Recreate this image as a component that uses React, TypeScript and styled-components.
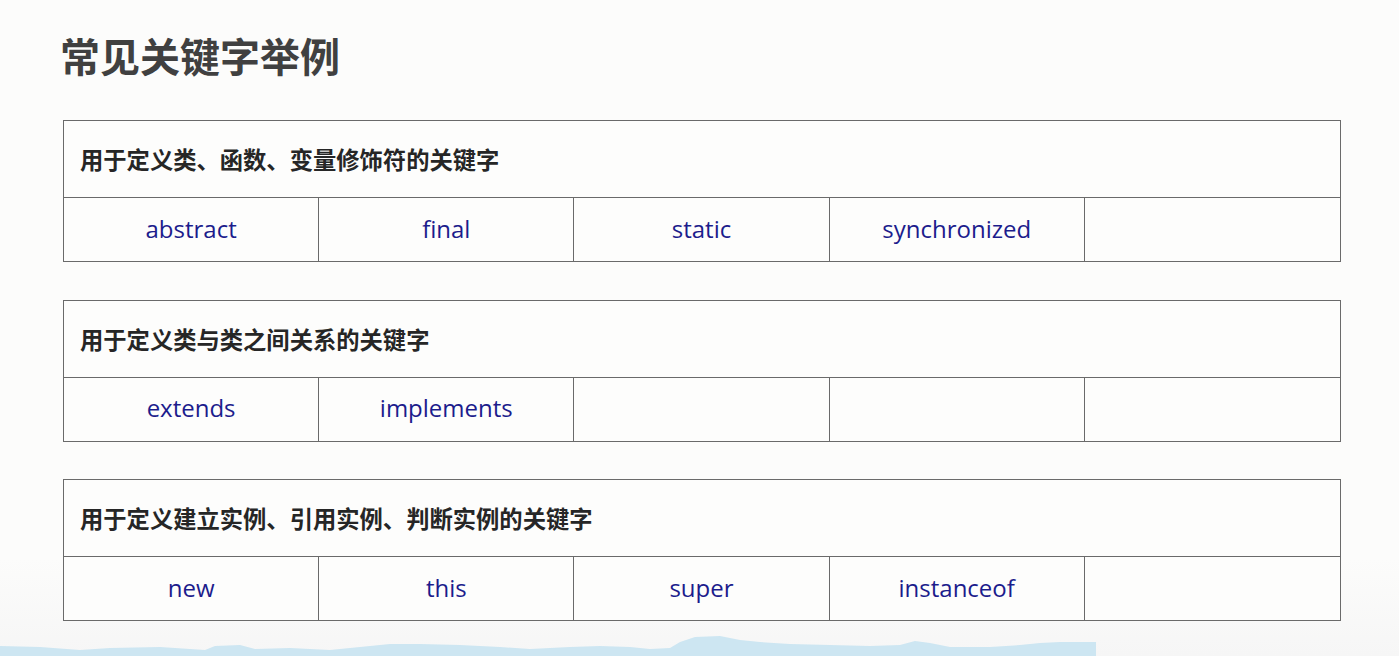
import React from 'react';
import styled, { createGlobalStyle } from 'styled-components';

const GlobalStyle = createGlobalStyle`
  html, body {
    margin: 0;
    padding: 0;
    background: #fcfcfb;
  }
`;

const Page = styled.div`
  width: 1399px;
  height: 656px;
  display: flex;
  flex-direction: column;
  overflow: hidden;
  background: linear-gradient(to bottom, #fcfcfb 85%, #f6f6f6 100%);
  font-family: "Noto Sans", "Noto Sans CJK SC", sans-serif;
`;

const Title = styled.h1`
  margin: 29px 0 0 60px;
  font-family: "Noto Sans CJK SC", sans-serif;
  font-size: 40px;
  line-height: 52px;
  font-weight: 700;
  color: #404040;
`;

const Tables = styled.div`
  display: flex;
  flex-direction: column;
  gap: 37.5px;
  margin: 39px 0 0 63px;
  width: 1278px;
`;

const Table = styled.div`
  display: grid;
  grid-template-columns: repeat(5, 1fr);
  border: 1px solid #6a6a6a;
  background: #fdfdfc;
`;

const Header = styled.div`
  grid-column: 1 / -1;
  height: 76px;
  display: flex;
  align-items: center;
  padding-left: 16px;
  border-bottom: 1px solid #6a6a6a;
  font-family: "Noto Sans CJK SC", sans-serif;
  font-size: 23.3px;
  font-weight: 700;
  color: #262626;
`;

const Cell = styled.div<{ $last?: boolean }>`
  height: 63px;
  display: flex;
  align-items: center;
  justify-content: center;
  padding-bottom: 3px;
  box-sizing: border-box;
  border-right: ${({ $last }) => ($last ? 'none' : '1px solid #6a6a6a')};
  font-family: "Open Sans", "Noto Sans", sans-serif;
  font-size: 24px;
  color: #1c1c8c;
`;

const Wave = styled.svg`
  margin-top: auto;
  display: block;
  width: 1096px;
  height: 22px;
`;

const groups = [
  {
    title: '用于定义类、函数、变量修饰符的关键字',
    words: ['abstract', 'final', 'static', 'synchronized', ''],
  },
  {
    title: '用于定义类与类之间关系的关键字',
    words: ['extends', 'implements', '', '', ''],
  },
  {
    title: '用于定义建立实例、引用实例、判断实例的关键字',
    words: ['new', 'this', 'super', 'instanceof', ''],
  },
];

const wavePoints =
  '0,12 40,13 80,16 110,14 160,13 190,15 205,16 215,12 240,11 255,15 290,14 330,16 360,13 390,10 420,10 460,11 500,13 530,15 570,13 600,12 630,13 650,15 670,14 680,8 695,3 720,2 740,6 760,8 790,10 830,11 870,12 900,11 915,7 930,9 950,13 990,13 1020,11 1040,9 1060,8 1096,8 1096,22 0,22';

export default function App() {
  return (
    <>
      <GlobalStyle />
      <Page>
        <Title>常见关键字举例</Title>
        <Tables>
          {groups.map((g) => (
            <Table key={g.title}>
              <Header>{g.title}</Header>
              {g.words.map((w, i) => (
                <Cell key={i} $last={i === g.words.length - 1}>
                  {w}
                </Cell>
              ))}
            </Table>
          ))}
        </Tables>
        <Wave viewBox="0 0 1096 22" preserveAspectRatio="none">
          <polygon points={wavePoints} fill="#cde6f2" />
        </Wave>
      </Page>
    </>
  );
}
